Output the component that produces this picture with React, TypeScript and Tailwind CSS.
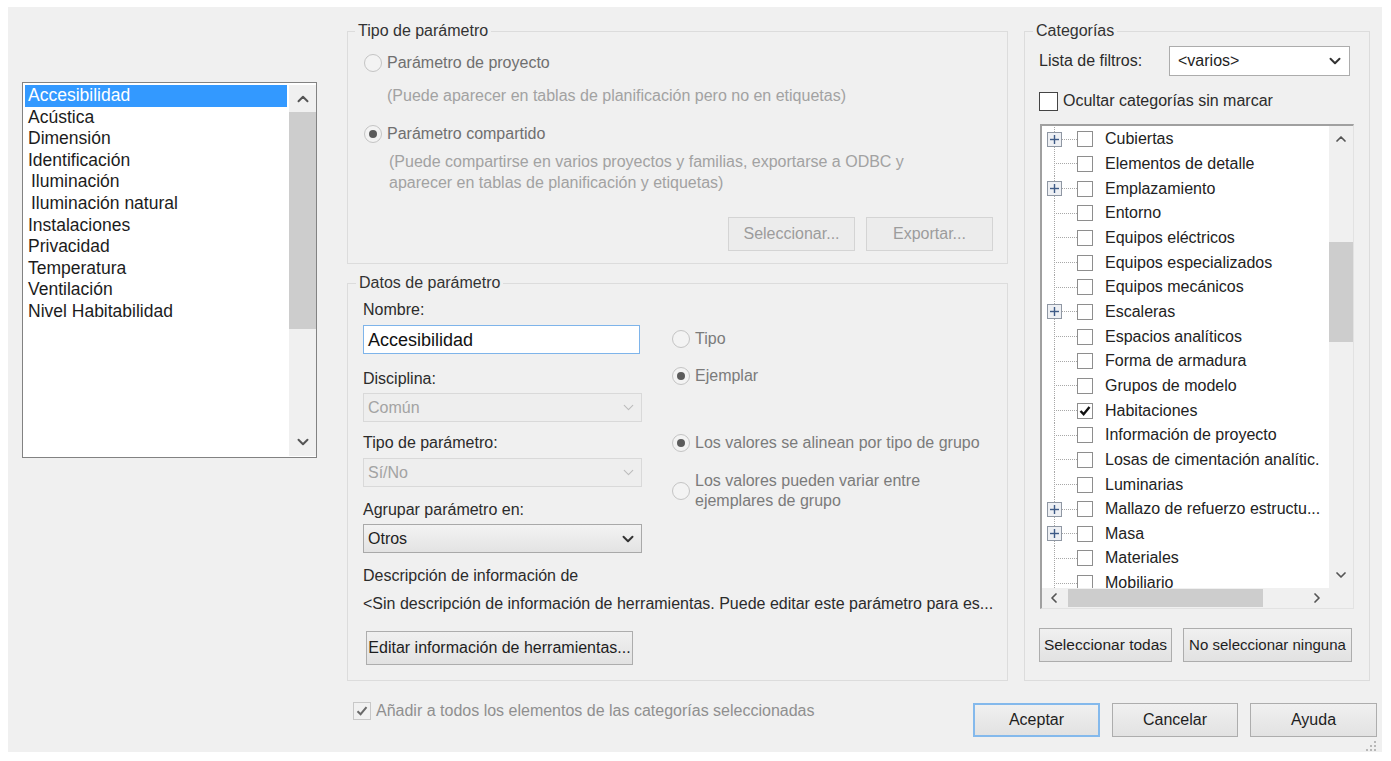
import { ChevronDown, ChevronUp, ChevronLeft, ChevronRight } from "lucide-react";
import type { ReactNode } from "react";

// Left list of shared parameters
const params = [
    { name: "Accesibilidad", indent: false },
    { name: "Acústica", indent: false },
    { name: "Dimensión", indent: false },
    { name: "Identificación", indent: false },
    { name: "Iluminación", indent: true },
    { name: "Iluminación natural", indent: true },
    { name: "Instalaciones", indent: false },
    { name: "Privacidad", indent: false },
    { name: "Temperatura", indent: false },
    { name: "Ventilación", indent: false },
    { name: "Nivel Habitabilidad", indent: false },
];

// Category tree
const categories = [
    { name: "Cubiertas", plus: true },
    { name: "Elementos de detalle" },
    { name: "Emplazamiento", plus: true },
    { name: "Entorno" },
    { name: "Equipos eléctricos" },
    { name: "Equipos especializados" },
    { name: "Equipos mecánicos" },
    { name: "Escaleras", plus: true },
    { name: "Espacios analíticos" },
    { name: "Forma de armadura" },
    { name: "Grupos de modelo" },
    { name: "Habitaciones", checked: true },
    { name: "Información de proyecto" },
    { name: "Losas de cimentación analític." },
    { name: "Luminarias" },
    { name: "Mallazo de refuerzo estructu...", plus: true },
    { name: "Masa", plus: true },
    { name: "Materiales" },
    { name: "Mobiliario" },
];

function Radio({ checked, children, className }: { checked?: boolean; children: ReactNode; className?: string }) {
    return (
        <div className={`flex items-center gap-[5px] ${className ?? ""}`}>
            <span className="flex items-center justify-center w-[18px] h-[18px] shrink-0 rounded-full border border-[#c4c4c4] bg-[#f3f3f3]">
                {checked && <span className="w-[8px] h-[8px] rounded-full bg-[#5c5c5c]" />}
            </span>
            {children}
        </div>
    );
}

function Check({ checked, size = 16, border = "border-[#8e8e8e]" }: { checked?: boolean; size?: number; border?: string }) {
    return (
        <span
            className={`flex items-center justify-center shrink-0 bg-white border ${border}`}
            style={{ width: size, height: size }}
        >
            {checked && (
                <svg width="12" height="12" viewBox="0 0 12 12">
                    <path d="M1.5 6 L4.6 9.2 L10.5 2" fill="none" stroke="#111" strokeWidth="2.4" />
                </svg>
            )}
        </span>
    );
}

function TreeLines({ plus }: { plus?: boolean }) {
    return (
        <svg width="35" height="25" viewBox="0 0 35 25" className="shrink-0">
            <line x1="12.5" y1="0" x2="12.5" y2="25" stroke="#a8a8a8" strokeDasharray="1 1" />
            <line x1="12" y1="12.5" x2="35" y2="12.5" stroke="#a8a8a8" strokeDasharray="1 1" />
            {plus && (
                <g>
                    <rect x="5.5" y="5.5" width="14" height="14" fill="#eef0f4" stroke="#8f97a3" />
                    <line x1="8" y1="12.5" x2="17" y2="12.5" stroke="#3e5a86" strokeWidth="1.4" />
                    <line x1="12.5" y1="8" x2="12.5" y2="17" stroke="#3e5a86" strokeWidth="1.4" />
                </g>
            )}
        </svg>
    );
}

function Button({ children, className }: { children: ReactNode; className?: string }) {
    return (
        <div className={`flex items-center justify-center h-[34px] border whitespace-nowrap ${className ?? "text-[16px]"}`}>
            {children}
        </div>
    );
}

const normalBtn = "bg-gradient-to-b from-[#f0f0f0] to-[#e2e2e2] border-[#adadad] text-[#1e1e1e] text-[16px]";

export default function App() {
    return (
        <div className="w-[1391px] h-[761px] bg-white pt-[7px] pl-[8px] font-['Liberation_Sans',Arial,sans-serif] text-[#2b2b2b]">
            <div className="flex flex-col w-[1374px] h-[745px] bg-[#f0f0f0] pt-[15px] pl-[14px] pr-[5px]">
                <div className="flex">
                    {/* Parameter list */}
                    <div className="flex w-[295px] h-[376px] mt-[60px] bg-white border border-[#828282] pl-[2px] pt-[2px] pb-[1px]">
                        <div className="flex-1 pr-[2px]">
                            {params.map((p, i) => (
                                <div
                                    key={p.name}
                                    className={`flex items-center h-[21.6px] text-[17.5px] leading-none ${
                                        i === 0 ? "bg-[#3399ff] text-white" : "text-[#1c1c1c]"
                                    } ${p.indent ? "pl-[6px]" : "pl-[3px]"}`}
                                >
                                    {p.name}
                                </div>
                            ))}
                        </div>
                        <div className="flex flex-col w-[27px] bg-[#f0f0f0]">
                            <div className="flex items-center justify-center h-[27px]">
                                <ChevronUp size={18} strokeWidth={2.6} color="#555" />
                            </div>
                            <div className="h-[217px] bg-[#cdcdcd]" />
                            <div className="flex-1" />
                            <div className="flex items-center justify-center h-[28px]">
                                <ChevronDown size={18} strokeWidth={2.6} color="#555" />
                            </div>
                        </div>
                    </div>

                    {/* Middle column */}
                    <div className="flex flex-col w-[661px] ml-[30px] gap-[10px]">
                        <fieldset className="h-[242px] border border-[#dcdcdc]">
                            <legend className="ml-[7px] px-[3px] text-[16px] leading-[18px] text-[#333]">
                                Tipo de parámetro
                            </legend>
                            <div className="flex flex-col pl-[16px] pt-[13px] text-[16px] leading-[20px]">
                                <Radio>
                                    <span className="text-[#6f6f6f]">Parámetro de proyecto</span>
                                </Radio>
                                <div className="mt-[13px] pl-[23px] text-[#a2a2a2]">
                                    (Puede aparecer en tablas de planificación pero no en etiquetas)
                                </div>
                                <Radio checked className="mt-[18px]">
                                    <span className="text-[#6f6f6f]">Parámetro compartido</span>
                                </Radio>
                                <div className="mt-[7px] pl-[25px] leading-[21px] text-[#a2a2a2]">
                                    (Puede compartirse en varios proyectos y familias, exportarse a ODBC y
                                    <br />
                                    aparecer en tablas de planificación y etiquetas)
                                </div>
                                <div className="flex justify-end gap-[11px] mt-[24px] pr-[14px]">
                                    <Button className="w-[127px] bg-[#ececec] border-[#d4d4d4] text-[#9c9c9c] text-[16px]">
                                        Seleccionar...
                                    </Button>
                                    <Button className="w-[127px] bg-[#ececec] border-[#d4d4d4] text-[#9c9c9c] text-[16px]">
                                        Exportar...
                                    </Button>
                                </div>
                            </div>
                        </fieldset>

                        <fieldset className="h-[407px] border border-[#dcdcdc]">
                            <legend className="ml-[8px] px-[3px] text-[16px] leading-[18px] text-[#333]">
                                Datos de parámetro
                            </legend>
                            <div className="flex flex-col pl-[15px] pt-[8px] text-[16px] leading-[20px]">
                                <div className="flex gap-[30px]">
                                    <div className="flex flex-col w-[279px]">
                                        <div>Nombre:</div>
                                        <div className="flex items-center h-[29px] mt-[5px] w-[277px] pl-[4px] bg-white border border-[#7eb4ea] text-[18px] text-[#111]">
                                            Accesibilidad
                                        </div>
                                        <div className="mt-[15px]">Disciplina:</div>
                                        <div className="flex items-center justify-between h-[29px] mt-[4px] pl-[4px] pr-[4px] border border-[#d9d9d9] bg-[#eeeeee] text-[#a3a3a3]">
                                            Común
                                            <ChevronDown size={17} strokeWidth={1.6} color="#bdbdbd" />
                                        </div>
                                        <div className="mt-[11px]">Tipo de parámetro:</div>
                                        <div className="flex items-center justify-between h-[29px] mt-[5px] pl-[4px] pr-[4px] border border-[#d9d9d9] bg-[#eeeeee] text-[#a3a3a3]">
                                            Sí/No
                                            <ChevronDown size={17} strokeWidth={1.6} color="#bdbdbd" />
                                        </div>
                                        <div className="mt-[13px]">Agrupar parámetro en:</div>
                                        <div className="flex items-center justify-between h-[29px] mt-[4px] pl-[4px] pr-[4px] border border-[#a9a9a9] bg-gradient-to-b from-[#f3f3f3] to-[#e3e3e3] text-[#1e1e1e]">
                                            Otros
                                            <ChevronDown size={18} strokeWidth={2.6} color="#333" />
                                        </div>
                                    </div>
                                    <div className="flex flex-col text-[#7b7b7b]">
                                        <Radio className="mt-[29px]">Tipo</Radio>
                                        <Radio checked className="mt-[17px]">Ejemplar</Radio>
                                        <Radio checked className="mt-[47px]">Los valores se alinean por tipo de grupo</Radio>
                                        <Radio className="mt-[18px]">
                                            <span>
                                                Los valores pueden variar entre
                                                <br />
                                                ejemplares de grupo
                                            </span>
                                        </Radio>
                                    </div>
                                </div>
                                <div className="mt-[13px]">Descripción de información de</div>
                                <div className="mt-[8px]">
                                    &lt;Sin descripción de información de herramientas. Puede editar este parámetro para es...
                                </div>
                                <Button className={`w-[267px] mt-[17px] ml-[3px] ${normalBtn}`}>
                                    Editar información de herramientas...
                                </Button>
                            </div>
                        </fieldset>
                    </div>

                    {/* Categories */}
                    <fieldset className="w-[345px] h-[659px] ml-[16px] border border-[#dcdcdc]">
                        <legend className="ml-[8px] px-[3px] text-[16px] leading-[18px] text-[#333]">
                            Categorías
                        </legend>
                        <div className="flex flex-col pl-[14px] pr-[15px] pt-[6px] text-[16px]">
                            <div className="flex items-center justify-between">
                                <span>Lista de filtros:</span>
                                <div className="flex items-center justify-between w-[181px] h-[30px] mr-[4px] pl-[8px] pr-[5px] bg-white border border-[#acacac] text-[#1e1e1e]">
                                    &lt;varios&gt;
                                    <ChevronDown size={18} strokeWidth={2.6} color="#333" />
                                </div>
                            </div>
                            <div className="flex items-center gap-[5px] mt-[13px]">
                                <Check size={19} border="border-[#444]" />
                                <span>Ocultar categorías sin marcar</span>
                            </div>

                            {/* Tree */}
                            <div className="flex flex-col w-[314px] h-[485px] mt-[11px] ml-[1px] bg-[#f0f0f0] border-t-2 border-l-2 border-[#a0a0a0] border-r border-b border-r-[#e2e2e2] border-b-[#e2e2e2]">
                                <div className="flex flex-1 min-h-0">
                                    <div className="flex-1 overflow-hidden bg-white pt-[1px]">
                                        {categories.map((c) => (
                                            <div key={c.name} className="flex items-center h-[24.67px] text-[16px] text-[#222] whitespace-nowrap">
                                                <TreeLines plus={c.plus} />
                                                <Check checked={c.checked} />
                                                <span className="ml-[12px]">{c.name}</span>
                                            </div>
                                        ))}
                                    </div>
                                    <div className="flex flex-col w-[24px] bg-[#f0f0f0]">
                                        <div className="flex items-center justify-center h-[26px]">
                                            <ChevronUp size={16} strokeWidth={2.6} color="#555" />
                                        </div>
                                        <div className="h-[100px] mt-[90px] bg-[#cdcdcd]" />
                                        <div className="flex-1" />
                                        <div className="flex items-center justify-center h-[26px]">
                                            <ChevronDown size={16} strokeWidth={2.6} color="#555" />
                                        </div>
                                    </div>
                                </div>
                                <div className="flex h-[20px]">
                                    <div className="flex items-center flex-1">
                                        <div className="flex items-center justify-center w-[24px]">
                                            <ChevronLeft size={16} strokeWidth={2.6} color="#555" />
                                        </div>
                                        <div className="w-[195px] h-[18px] ml-[2px] bg-[#cdcdcd]" />
                                        <div className="flex-1" />
                                        <div className="flex items-center justify-center w-[24px]">
                                            <ChevronRight size={16} strokeWidth={2.6} color="#555" />
                                        </div>
                                    </div>
                                    <div className="w-[24px]" />
                                </div>
                            </div>

                            <div className="flex gap-[11px] mt-[19px]">
                                <Button className="w-[133px] bg-gradient-to-b from-[#f0f0f0] to-[#e2e2e2] border-[#adadad] text-[#1e1e1e] text-[15.5px]">
                                    Seleccionar todas
                                </Button>
                                <Button className="w-[169px] bg-gradient-to-b from-[#f0f0f0] to-[#e2e2e2] border-[#adadad] text-[#1e1e1e] text-[15px]">
                                    No seleccionar ninguna
                                </Button>
                            </div>
                        </div>
                    </fieldset>
                </div>

                {/* Bottom row */}
                <div className="flex items-start mt-[18px]">
                    <div className="flex items-center gap-[5px] ml-[331px] text-[16px] text-[#8f8f8f]">
                        <span className="flex items-center justify-center w-[18px] h-[18px] border border-[#c8c8c8] bg-[#f1f1f1]">
                            <svg width="12" height="12" viewBox="0 0 12 12">
                                <path d="M1.5 6.2 L4.6 9.2 L10.5 2.2" fill="none" stroke="#6a6a6a" strokeWidth="2" />
                            </svg>
                        </span>
                        Añadir a todos los elementos de las categorías seleccionadas
                    </div>
                    <div className="flex gap-[12px] ml-auto mt-[4px]">
                        <Button className="w-[127px] bg-gradient-to-b from-[#f0f0f0] to-[#e2e2e2] border-2 border-[#84b9ec] text-[#1e1e1e] text-[16px]">
                            Aceptar
                        </Button>
                        <Button className={`w-[126px] ${normalBtn}`}>
                            Cancelar
                        </Button>
                        <Button className={`w-[127px] ${normalBtn}`}>
                            Ayuda
                        </Button>
                    </div>
                </div>
                <div className="flex justify-end mt-[3px]">
                    <svg width="12" height="12" viewBox="0 0 12 12">
                        <g fill="#b8b8b8">
                            <rect x="9" y="1" width="2" height="2" />
                            <rect x="5" y="5" width="2" height="2" />
                            <rect x="9" y="5" width="2" height="2" />
                            <rect x="1" y="9" width="2" height="2" />
                            <rect x="5" y="9" width="2" height="2" />
                            <rect x="9" y="9" width="2" height="2" />
                        </g>
                    </svg>
                </div>
            </div>
        </div>
    );
}
